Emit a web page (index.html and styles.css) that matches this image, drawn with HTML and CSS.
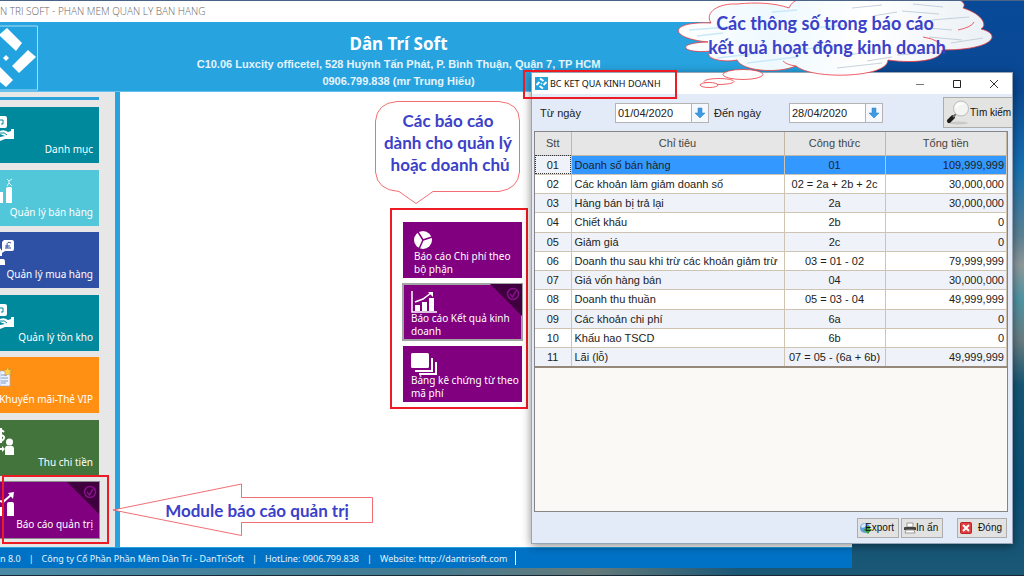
FILE: index.html
```html
<!DOCTYPE html>
<html lang="vi">
<head>
<meta charset="utf-8">
<title>Dân Trí Soft</title>
<link rel="stylesheet" href="styles.css">
</head>
<body>
<div class="desktop">
  <main class="app">
    <div class="app-title">N TRI SOFT - PHAN MEM QUAN LY BAN HANG</div>
    <header class="banner">
      <svg class="logo" viewBox="0 0 38 66" width="38" height="66" aria-hidden="true">
        <path d="M-1 1H37.500V65H-1" fill="#22a2df" stroke="#a5dcf5"/>
        <g fill="#fff"><path d="M0 9 7 3 22 18 16 26 0 11Z"/><path d="M12 41 28 25 36 32 19 48Z"/><path d="M0 42 13 55 6 62 0 57Z"/><path d="M6 30 9 33 6 36 3 33Z"/></g>
      </svg>
      <div class="company">
        <h1>Dân Trí Soft</h1>
        <p>C10.06 Luxcity officetel, 528 Huỳnh Tấn Phát, P. Bình Thuận, Quận 7, TP HCM</p>
        <p>0906.799.838 (mr Trung Hiếu)</p>
      </div>
    </header>
    <div class="content">
      <nav class="sidebar">
        <div class="tiles">
          <button class="tile teal">
            <svg viewBox="0 0 16 28" width="16" height="28" aria-hidden="true"><path fill="#fff" d="M0 1H5Q7 1 7 3V11Q7 13 5 13H0ZM0 16Q4 14 8 17L11 16V14H14V24H5L0 26V22L5 21 0 19Z"/><path stroke="#00889c" fill="none" d="M0 5H3V9H1M0 18Q5 17 7 20"/></svg>
            <span>Danh mục</span></button>
          <button class="tile cyan">
            <svg viewBox="0 0 16 28" width="16" height="28" aria-hidden="true"><path fill="#fff" d="M0 14H3V25H0ZM6 11Q6 9 8 9H11Q12 9 12 11V25H6Z"/><path stroke="#e4f7fa" fill="none" d="M7 1 9 3 12 1M9 3V5M7 8 9 5 12 8"/></svg>
            <span>Quản lý bán hàng</span></button>
          <button class="tile blue">
            <svg viewBox="0 0 16 28" width="16" height="28" aria-hidden="true"><path fill="#fff" d="M4 0H12Q14 0 14 2V9Q14 11 12 11H5L2 13V2ZM0 8 2 11V16H0ZM0 19H3Q5 19 5 22V25H0Z"/><path stroke="#2f51a5" fill="none" d="M11 3Q7 1 7 5V8H5M5 6H10M7 8H11"/></svg>
            <span>Quản lý mua hàng</span></button>
          <button class="tile teal">
            <svg viewBox="0 0 16 28" width="16" height="28" aria-hidden="true"><path fill="#fff" d="M0 1H5Q7 1 7 3V11Q7 13 5 13H0ZM0 16Q4 14 8 17L11 16V14H14V24H5L0 26V22L5 21 0 19Z"/><path stroke="#00889c" fill="none" d="M0 5H3V9H1M0 18Q5 17 7 20"/></svg>
            <span>Quản lý tồn kho</span></button>
          <button class="tile orange">
            <svg viewBox="0 0 16 28" width="16" height="28" aria-hidden="true"><path fill="#eef4ff" stroke="#91a9d0" stroke-width=".6" d="M0 6H10V21H0Z"/><path stroke="#7f9cc8" fill="none" d="M1 10H7M1 13H8M1 16H8M1 18H6"/><path fill="#ffce45" stroke="#b98226" stroke-width=".5" d="M8 2 9 5 13 5 10 7 12 10 8 9 5 11 5 7 3 5 6 5Z"/></svg>
            <span>Khuyến mãi-Thẻ VIP</span></button>
          <button class="tile green">
            <svg viewBox="0 0 16 28" width="16" height="28" aria-hidden="true"><path stroke="#fff" stroke-width="2" fill="none" d="M4 4Q0 0-3 3M-1 6Q5 8 4 10Q3 14-2 12M1 0V15"/><circle cx="9.500" cy="14" r="3.500" fill="#fff"/><path fill="#fff" d="M5 21Q5 17 9 18Q14 17 14 21V27H5ZM0 20H2V18L5 21 2 24V22H0Z"/></svg>
            <span>Thu chi tiền</span></button>
          <button class="tile purple selected">
            <svg viewBox="0 0 16 28" width="16" height="28" aria-hidden="true"><path fill="#fff" d="M0 17H4V26H0ZM7 14Q7 12 9 12H12Q14 12 14 14V26H7Z"/><path stroke="#fff" stroke-width="2" fill="none" d="M0 11 3 12 11 5"/><path fill="#fff" d="M8 3 14 2 13 9Z"/></svg>
            <svg class="check" viewBox="0 0 14 14" width="14" height="14" aria-hidden="true"><circle cx="7" cy="7" r="5.500"/><path d="M4 7 6.500 10 10 4"/></svg>
            <span>Báo cáo quản trị</span></button>
        </div>
      </nav>
      <section class="workspace">
        <div class="reports">
          <button class="report">
            <svg class="pie" viewBox="0 0 26 22" width="26" height="22" aria-hidden="true"><circle cx="9" cy="11" r="9" fill="#fff"/><path d="M4 3 9 11 18 8M9 11 5 20" stroke="#800080" stroke-width="1.500" fill="none"/></svg>
            <span>Báo cáo Chi phí theo bộ phận</span></button>
          <button class="report selected">
            <svg viewBox="0 0 26 22" width="26" height="22" aria-hidden="true"><path d="M1 0V21H26" stroke="#fff" fill="none" stroke-width="1.500"/><path d="M4 14H9V20H4ZM11 11H16V20H11ZM18 7H23V20H18Z" fill="#fff"/><path d="M4 11 12 8 20 2" stroke="#fff" stroke-width="1.500" fill="none"/><path d="M17 1H22V6Z" fill="#fff"/></svg>
            <svg class="check" viewBox="0 0 14 14" width="14" height="14" aria-hidden="true"><circle cx="7" cy="7" r="5.500"/><path d="M4 7 6.500 10 10 4"/></svg>
            <span>Báo cáo Kết quả kinh doanh</span></button>
          <button class="report">
            <svg viewBox="0 0 26 22" width="26" height="22" aria-hidden="true"><rect width="18" height="15" rx="1.500" fill="#fff"/><path d="M4 18H21V5M8 21H25V9" stroke="#fff" stroke-width="2" fill="none"/></svg>
            <span>Bảng kê chứng từ theo mã phí</span></button>
        </div>
      </section>
    </div>
    <footer class="status">
      <span>n 8.0</span><span>|</span><span>Công ty Cổ Phần Phần Mềm Dân Trí - DanTriSoft</span><span>|</span><span>HotLine: 0906.799.838</span><span>|</span><span>Website: <a href="http://dantrisoft.com">http://dantrisoft.com</a></span><i class="caret"></i>
    </footer>
  </main>

  <section class="dialog">
    <div class="dialog-title">
      <svg viewBox="0 0 13 13" width="13" height="13" aria-hidden="true"><path fill="#22a2df" d="M0 0H13V13H0Z"/><path d="M5 1.500 8.500 4M11.500 5 8.500 8M8 11.500 4.500 9M1.500 8 4.500 5" stroke="#fff" stroke-width="2"/><path fill="#fff" d="M6.500 5.500 7.500 6.500 6.500 7.500 5.500 6.500Z"/></svg>
      <h2>BC KET QUA KINH DOANH</h2>
      <div class="window-buttons">
        <button aria-label="Thu nhỏ"><svg viewBox="0 0 10 10" width="10" height="10"><path d="M1 5.500H9" stroke="#777"/></svg></button>
        <button aria-label="Phóng to"><svg viewBox="0 0 10 10" width="10" height="10"><path d="M1.500 1.500H8.500V8.500H1.500Z" fill="none" stroke="#222"/></svg></button>
        <button aria-label="Đóng cửa sổ"><svg viewBox="0 0 10 10" width="10" height="10"><path d="M1 1 9 9M9 1 1 9" stroke="#333"/></svg></button>
      </div>
    </div>
    <form class="filters">
      <label for="from">Từ ngày</label>
      <div class="date"><input id="from" type="text" value="01/04/2020"><button type="button" aria-label="Chọn từ ngày"><svg viewBox="0 0 12 12" width="12" height="12"><path d="M4 1H8V6H11L6 11 1 6H4Z" fill="#3b9be3" stroke="#287dc4" stroke-width=".5"/></svg></button></div>
      <label for="to">Đến ngày</label>
      <div class="date"><input id="to" type="text" value="28/04/2020"><button type="button" aria-label="Chọn đến ngày"><svg viewBox="0 0 12 12" width="12" height="12"><path d="M4 1H8V6H11L6 11 1 6H4Z" fill="#3b9be3" stroke="#287dc4" stroke-width=".5"/></svg></button></div>
      <button type="button" class="search"><svg viewBox="0 0 26 26" width="26" height="26" aria-hidden="true"><ellipse cx="14" cy="23" rx="10" ry="1.500" fill="#c9c9c9"/><path d="M5 21 9 17" stroke="#1c1c1c" stroke-width="4" stroke-linecap="round"/><path d="M9 17 12 14" stroke="#777" stroke-width="2"/><circle cx="17" cy="8.500" r="7.500" fill="#f4f4f2" stroke="#bbb"/><path d="M12 8Q13 3 19 4" stroke="#fff" stroke-width="2" fill="none"/></svg>Tìm kiếm</button>
    </form>
    <div class="grid">
      <table>
        <colgroup><col class="c-no"><col class="c-name"><col class="c-formula"><col></colgroup>
        <thead><tr><th>Stt</th><th>Chỉ tiêu</th><th>Công thức</th><th>Tổng tiền</th></tr></thead>
        <tbody>
          <tr class="current"><td>01</td><td>Doanh số bán hàng</td><td>01</td><td>109,999,999</td></tr>
          <tr><td>02</td><td>Các khoản làm giảm doanh số</td><td>02 = 2a + 2b + 2c</td><td>30,000,000</td></tr>
          <tr><td>03</td><td>Hàng bán bị trả lại</td><td>2a</td><td>30,000,000</td></tr>
          <tr><td>04</td><td>Chiết khấu</td><td>2b</td><td>0</td></tr>
          <tr><td>05</td><td>Giảm giá</td><td>2c</td><td>0</td></tr>
          <tr><td>06</td><td>Doanh thu sau khi trừ các khoản giảm trừ</td><td>03 = 01 - 02</td><td>79,999,999</td></tr>
          <tr><td>07</td><td>Giá vốn hàng bán</td><td>04</td><td>30,000,000</td></tr>
          <tr><td>08</td><td>Doanh thu thuần</td><td>05 = 03 - 04</td><td>49,999,999</td></tr>
          <tr><td>09</td><td>Các khoản chi phí</td><td>6a</td><td>0</td></tr>
          <tr><td>10</td><td>Khấu hao TSCD</td><td>6b</td><td>0</td></tr>
          <tr><td>11</td><td>Lãi (lỗ)</td><td>07 = 05 - (6a + 6b)</td><td>49,999,999</td></tr>
        </tbody>
      </table>
    </div>
    <div class="actions">
      <button class="export"><svg viewBox="0 0 12 12" width="12" height="12" aria-hidden="true"><circle cx="5" cy="6" r="5" fill="#5f9fdf"/><path d="M1 4Q4 0 7 2L5 5 2 6Z" fill="#d3ebfa"/><path d="M6 4H10V7H12L8 12 3 7H6Z" fill="#36a531"/></svg><span>Export</span></button>
      <button><svg viewBox="0 0 12 12" width="12" height="12" aria-hidden="true"><path d="M3 1H9V5H3Z" fill="#fff" stroke="#999"/><path d="M0 6Q0 5 1 5H11Q12 5 12 6V8H0Z" fill="#444"/><path d="M2 8H10L11 11H1Z" fill="#fff" stroke="#999"/></svg>In ấn</button>
      <button class="close"><svg viewBox="0 0 12 12" width="12" height="12" aria-hidden="true"><rect x=".5" y=".5" width="11" height="11" rx="1" fill="#e23b3b" stroke="#b62626"/><path d="M3 3 9 9M9 3 3 9" stroke="#fff" stroke-width="2"/></svg>Đóng</button>
    </div>
  </section>

  <div class="mark mark-module"></div>
  <div class="mark mark-title"></div>

  <div class="note note-reports">
    <svg viewBox="0 0 146 104" width="146" height="104" aria-hidden="true"><path d="M22 .5H124Q144.500 2 144.500 20V71Q143 88 124 90.500H58L41 102.500 24 90.500Q2 89 .5 71V20Q2 2 22 .5Z" fill="#fff" stroke="#ee4a50" stroke-width=".8"/></svg>
    <p>Các báo cáo<br>dành cho quản lý<br>&nbsp;hoặc doanh chủ</p>
  </div>
  <div class="note note-module">
    <svg viewBox="0 0 262 54" width="262" height="54" aria-hidden="true"><path d="M1 27 129.500 1V14.500H260.500V39.500H129.500V52.500Z" fill="#fff" stroke="#ee4a50" stroke-width=".8"/></svg>
    <p>Module báo cáo quản trị</p>
  </div>
  <div class="note note-cloud">
    <svg viewBox="0 0 318 90" width="318" height="90" aria-hidden="true">
      <defs>
        <linearGradient id="mist" x1="0" x2="1"><stop offset="0" stop-color="#fff"/><stop offset=".3" stop-color="#eef9fe"/><stop offset=".6" stop-color="#fff"/><stop offset="1" stop-color="#eaf0f5"/></linearGradient>
        <clipPath id="cloud-clip"><path id="cloud" d="M34 23C27 12 42 3 60 4 80 2 98 3 112 8 116-2 130-5 155-4H270C287 0 289 4 286 8 305 14 311 25 304 29 325 34 318 50 265 50 265 60 240 64 211 60 211 78 135 80 119 66 100 74 65 71 60 60 45 63 25 58 34 51 5 54-3 43 31 42-10 38-8 21 34 23Z"/></clipPath>
      </defs>
      <use href="#cloud" fill="url(#mist)"/>
      <g clip-path="url(#cloud-clip)" stroke-width="1.500" fill="none">
        <path stroke="#c9e9f8" d="M12 30 52 27M20 36 46 33M40 58 84 53M70 63 120 57M118 50 158 46M125 29 170 25M95 12 120 10"/>
        <path stroke="#b9c6d2" stroke-width=".8" d="M175 8 205 5M196 16 220 12M225 11 262 14M255 20 292 17M238 27 275 30M274 43 306 38M220 55 262 52M190 61 215 57M160 68 205 63M252 37 285 40M236 4 266 7M170 55 200 51"/>
      </g>
      <use href="#cloud" fill="none" stroke="#ee3940" stroke-width=".8"/>
      <path d="M281 30Q295 27 297 22M246 37Q265 40 267 50M119 66Q110 65 106 61" fill="none" stroke="#ee3940" stroke-width=".8"/>
      <g fill="#fff" stroke="#ee3940" stroke-width=".8"><ellipse cx="66" cy="74.500" rx="20" ry="5"/><ellipse cx="42" cy="81.500" rx="15" ry="3"/><ellipse cx="32" cy="85" rx="9" ry="2.500"/></g>
    </svg>
    <p>Các thông số trong báo cáo<br>&nbsp;kết quả hoạt động kinh doanh</p>
  </div>
</div>
</body>
</html>
```
FILE: styles.css
```css
* { box-sizing: border-box; }
body { margin: 0; font-family: "Noto Sans", sans-serif; }
button { font: inherit; margin: 0; cursor: pointer; }
h1, h2, p { margin: 0; }
svg { display: block; flex: none; }

.desktop {
  position: relative;
  height: 100vh;
  min-height: 560px;
  overflow: hidden;
  border-top: 1px solid #4a6488;
  border-bottom: 1px solid #172936;
  background:
    linear-gradient(90deg, #4b8aa6 0, #427b92 40%, #657a7a 58%, transparent 72%) 0 100% / 100% 9px no-repeat,
    linear-gradient(180deg, #084a98 0, #0a4894 16%, #1672b4 29%, #5d8294 41%, #8e999b 46%, #4e95a4 52%, #687d82 59%, #145675 67%, #0b5078 85%, #1c5876 100%);
}

.app {
  position: absolute;
  inset: 0 172px 7px 0;
  display: flex;
  flex-direction: column;
  background: #fff;
}
.app-title { height: 21px; font: 300 10px/21px "Open Sans", "Noto Sans", sans-serif; color: #666; white-space: nowrap; }
.banner {
  display: flex;
  height: 70px;
  background: #27a3df;
  border-bottom: 1px solid #67bfeb;
}
.logo { margin-top: 3px; }
.company { flex: 1; padding-right: 93px; text-align: center; color: #fff; }
.company h1 { padding-top: 10px; font-size: 17px; line-height: 24px; }
.company p { font: bold 11px/17px "Liberation Sans", Arial, sans-serif; color: #e5f4fc; }

.content { flex: 1; display: flex; min-height: 0; }
.sidebar {
  width: 120px;
  padding: 5px 16px 9px 0;
  background: #e7e7e7;
  border-right: 5px solid #27a3df;
  display: flex;
}
.tiles {
  flex: 1;
  min-width: 0;
  display: flex;
  flex-direction: column;
  justify-content: space-between;
  padding-top: 7px;
  border-top: 3px solid #2ba3da;
}
.tile {
  position: relative;
  height: 56px;
  padding: 8px 6px 7px 0;
  border: 0;
  display: flex;
  flex-direction: column;
  justify-content: space-between;
  color: #fff;
  font-size: 10px;
  line-height: 14px;
}
.tile span { align-self: flex-end; margin-top: -1px; white-space: nowrap; }
.teal { background: #00889c; }
.cyan { background: #52c7da; }
.blue { background: #2f51a5; }
.orange { background: #ff9013; }
.green { background: #42743c; }
.purple { background: #800080; }
.tile.selected { outline: 1px solid #8c8c8c; }
.selected::before {
  content: "";
  position: absolute;
  top: 0;
  right: 0;
  width: 32px;
  height: 32px;
  background: #400040;
  clip-path: polygon(0 0, 100% 0, 100% 100%);
}
.check { position: absolute; top: 3px; right: 2px; fill: none; stroke: #86108a; stroke-width: 1.5; }

.workspace { flex: 1; padding: 116px 0 0 270px; }
.reports {
  width: 138px;
  display: grid;
  gap: 6px;
  padding: 12px 4px 5px 11px;
  border: 2px solid #ed1c24;
}
.report {
  position: relative;
  height: 56px;
  padding: 6px 0 2px 8px;
  border: 0;
  background: #800080;
  color: #fff;
  font-size: 10px;
  line-height: 13px;
  text-align: left;
}
.report.selected { outline: 2px solid #a3a3a3; outline-offset: -1px; }
.report .pie { margin-left: 3px; }
.report .pie + span { padding-left: 3px; }
.report span { display: block; margin-top: -1px; }

.status {
  height: 21px;
  display: flex;
  align-items: center;
  gap: 8px;
  background: #0072c6;
  border-top: 1px solid #28a1df;
  color: #e5f2fb;
  font-size: 9px;
  white-space: nowrap;
}
.status a { color: inherit; text-decoration: none; }
.caret { width: 1px; height: 14px; background: #fff; }

.dialog {
  position: absolute;
  inset: 71px 11px 31px 531px;
  display: flex;
  flex-direction: column;
  background: #e3ebf8;
  border: 1px solid #96a6b8;
  box-shadow: 0 2px 9px rgba(0, 0, 0, .45);
  font: 11px/14px "Liberation Sans", Arial, sans-serif;
  color: #222;
}
.dialog-title { height: 21px; display: flex; align-items: center; gap: 2px; padding: 0 13px 0 3px; background: #fff; }
.dialog h2 { font: 9px/14px "Noto Sans", sans-serif; color: #111; white-space: nowrap; }
.window-buttons { margin-left: auto; display: flex; gap: 27px; }
.window-buttons button { padding: 0; border: 0; background: none; }
.filters { height: 37px; display: flex; align-items: center; padding-left: 8px; white-space: nowrap; overflow: hidden; }
.filters label { flex: none; width: 75px; }
.date { flex: none; display: flex; width: 94px; height: 20px; margin-right: 5px; border: 1px solid #b4b4b4; background: #fff; }
.date input { flex: 1; min-width: 0; padding: 0 2px; border: 0; font: inherit; color: #222; }
.date button { width: 17px; padding: 0 2px; border: 0; border-left: 1px solid #b4b4b4; background: #f5f8fc; }
.search { flex: none; width: 69px; height: 31px; margin-left: auto; padding: 0; display: flex; align-items: center; background: #e3e3e1; border: 1px solid #adadad; border-right: 0; color: #111; font-size: 10px; }
.grid { flex: 1; min-height: 0; margin: 0 4px 0 2px; background: #fbf9f6; border: 1px solid #858585; }
table { width: 100%; height: 236px; border-collapse: collapse; table-layout: fixed; border-bottom: 2px solid #96897a; }
.c-no { width: 36px; }
.c-name { width: 213px; }
.c-formula { width: 101px; }
th, td { padding: 0 2px; border: 1px solid #cfc4b2; border-width: 0 1px 1px 0; text-align: center; white-space: nowrap; }
th { height: 23px; background: #e6e6e6; border-color: #c4b8a5; font-weight: normal; color: #444; }
td { height: 19px; }
td:nth-child(2) { padding-left: 3px; text-align: left; }
td:nth-child(4) { text-align: right; }
tbody tr { background: #fff; }
tbody tr:nth-child(odd) { background: #eff3f9; }
tbody .current td { background: #3398ff; }
tbody .current td:first-child { background: #eff3f9; outline: 1px dotted #333; outline-offset: -1px; }
.actions { height: 31px; display: flex; align-items: center; justify-content: flex-end; gap: 2px; padding-right: 5px; }
.actions button { width: 42px; height: 20px; padding: 0 4px 0 2px; display: flex; align-items: center; justify-content: space-between; background: #e2e2e2; border: 1px solid #adadad; color: #111; font-size: 10px; white-space: nowrap; }
.actions .export span { margin-left: -8px; }
.actions .close { width: 50px; margin-left: 12px; }

.mark { position: absolute; border: 2px solid #ed1c24; pointer-events: none; }
.mark-module { left: 2px; top: 474px; width: 107px; height: 69px; }
.mark-title { left: 523px; top: 69px; width: 154px; height: 29px; }
.note { position: absolute; color: #3b41c8; font-family: Lato, "Open Sans", sans-serif; font-weight: bold; text-align: center; white-space: nowrap; pointer-events: none; }
.note p { position: absolute; inset: 0; }
.note-reports { left: 375px; top: 100px; }
.note-reports p { padding-top: 9px; font-size: 17px; line-height: 22px; }
.note-module { left: 112px; top: 482px; }
.note-module p { padding: 16px 0 0 28px; font-size: 17px; line-height: 24px; }
.note-cloud { left: 677px; top: -1px; }
.note-cloud p { padding: 11px 22px 0 0; font-size: 18px; line-height: 24px; }
```
